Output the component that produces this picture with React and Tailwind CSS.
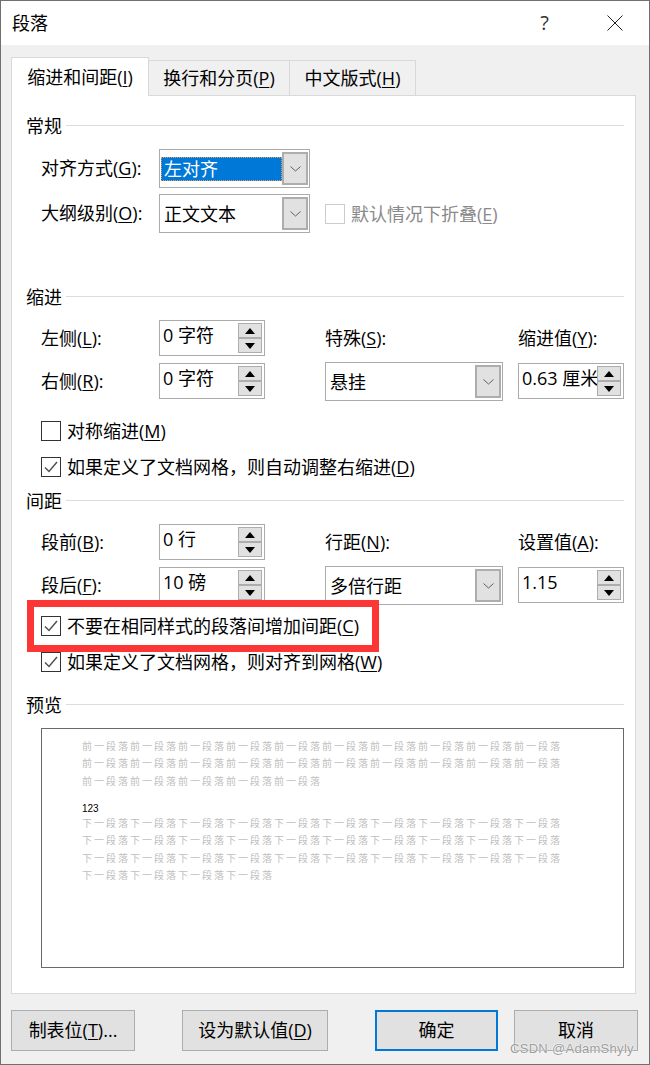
import React from "react";

const Key = ({ text, k, colon }) => (
  <span className="whitespace-nowrap">
    {text}(<u className="underline underline-offset-2">{k}</u>){colon ? ":" : ""}
  </span>
);

const Heading = ({ children, className = "" }) => (
  <div className={`flex h-6 items-center gap-[4px] ${className}`}>
    <span className="leading-6">{children}</span>
    <div className="mb-[2px] h-px flex-1 bg-[#dcdcdc]" />
  </div>
);

const Chevron = () => (
  <svg width="11" height="6" viewBox="0 0 11 6" fill="none">
    <path d="M0.5 0.5 L5.5 5 L10.5 0.5" stroke="#606060" strokeWidth="1" />
  </svg>
);

const Combo = ({ value, selected, className = "w-[178px]" }) => (
  <div className={`flex h-[39px] shrink-0 items-center border border-[#ababab] bg-white pr-[1px] ${className}`}>
    <div className="min-w-0 flex-1 pl-[1px]">
      {selected ? (
        <div className="h-[24px] border border-dotted border-[#e0a060] bg-[#0078d7] pl-[2px] leading-[22px] text-white">
          {value}
        </div>
      ) : (
        <div className="pl-[3px] leading-6">{value}</div>
      )}
    </div>
    <div className="flex h-[33px] w-[26px] items-center justify-center border-2 border-[#adadad] bg-[#e1e1e1]">
      <Chevron />
    </div>
  </div>
);

const Arrow = ({ down }) => (
  <svg width="10" height="6" viewBox="0 0 10 6">
    <path d={down ? "M0 0 H10 L5 6 Z" : "M0 6 H10 L5 0 Z"} fill="#000" />
  </svg>
);

const Spinner = ({ value }) => (
  <div className="flex h-9 w-[106px] shrink-0 border border-[#ababab] bg-white py-[2px] pl-[2px] pr-[2px]">
    <div className="min-w-0 flex-1 overflow-hidden whitespace-nowrap pl-[1px] leading-[25px]">{value}</div>
    <div className="flex w-6 shrink-0 flex-col">
      <div className="flex h-[15px] items-center justify-center border border-[#adadad] bg-[#e1e1e1]">
        <Arrow />
      </div>
      <div className="flex h-[15px] items-center justify-center border border-[#adadad] bg-[#e1e1e1]">
        <Arrow down />
      </div>
    </div>
  </div>
);

const Checkbox = ({ checked, disabled, className = "", children }) => (
  <div className={`flex h-5 items-center gap-[6px] ${className}`}>
    <div className={`flex size-5 shrink-0 items-center justify-center border bg-white ${disabled ? "border-[#cccccc]" : "border-[#333333]"}`}>
      {checked && (
        <svg width="14" height="12" viewBox="0 0 14 12" fill="none">
          <path d="M1 6.5 L5 10.5 L13 1" stroke="#505050" strokeWidth="1.5" />
        </svg>
      )}
    </div>
    <span className={`whitespace-nowrap leading-6 ${disabled ? "text-[#8a8a8a]" : ""}`}>{children}</span>
  </div>
);

// three columns shared by the indent and spacing groups
const FieldRows = ({ rows, mid, right }) => (
  <div className="ml-[15px] flex">
    <div className="w-[224px]">
      {rows.map((r, i) => (
        <div key={r.k} className={`flex h-9 ${i > 0 ? "mt-[7px]" : ""}`}>
          <div className="flex w-[118px] items-center pt-[1px]"><Key text={r.text} k={r.k} colon /></div>
          <Spinner value={r.value} />
        </div>
      ))}
    </div>
    <div className="ml-[60px] w-[178px]">
      <div className="flex h-[36px] items-center pt-[1px]"><Key text={mid.text} k={mid.k} colon /></div>
      <Combo value={mid.value} className="mt-[6px] w-[178px]" />
    </div>
    <div className="ml-[15px] w-[106px]">
      <div className="flex h-[36px] items-center pt-[1px]"><Key text={right.text} k={right.k} colon /></div>
      <div className="mt-[7px]"><Spinner value={right.value} /></div>
    </div>
  </div>
);

const Button = ({ className = "", primary, children }) => (
  <div
    className={`flex h-[41px] items-center justify-center bg-[#e1e1e1] pb-[1px] leading-5 ${
      primary ? "border-2 border-[#0078d7]" : "border border-[#adadad]"
    } ${className}`}
  >
    {children}
  </div>
);

const before = ["前一段落".repeat(10), "前一段落".repeat(10), "前一段落".repeat(5)];
const after = ["下一段落".repeat(10), "下一段落".repeat(10), "下一段落".repeat(10), "下一段落".repeat(4)];

export default function App() {
  return (
    <div className="relative h-[1065px] w-[650px] overflow-hidden border border-[#707070] bg-[#f0f0f0] font-['Open_Sans','Noto_Sans_CJK_SC',sans-serif] text-[18px] text-black">
      {/* title bar */}
      <div className="flex h-[44px] items-center bg-white pl-[11px]">
        <span>段落</span>
        <span className="ml-auto mr-[58px] text-[20px] text-[#333333]">?</span>
        <svg className="mr-[26px]" width="16" height="16" viewBox="0 0 16 16" fill="none">
          <path d="M0.5 0.5 L15.5 15.5 M15.5 0.5 L0.5 15.5" stroke="#222" strokeWidth="1" />
        </svg>
      </div>

      {/* tabs */}
      <div className="relative z-10 ml-[10px] mt-[12px] flex h-[39px] items-end">
        <div className="flex h-[39px] w-[138px] items-center justify-center border border-b-0 border-[#d9d9d9] bg-white">
          <Key text="缩进和间距" k="I" />
        </div>
        <div className="mb-px flex h-[35px] w-[141px] items-center justify-center border border-b-0 border-l-0 border-[#d9d9d9]">
          <Key text="换行和分页" k="P" />
        </div>
        <div className="mb-px flex h-[35px] w-[126px] items-center justify-center border border-b-0 border-l-0 border-[#d9d9d9]">
          <Key text="中文版式" k="H" />
        </div>
      </div>

      {/* panel */}
      <div className="ml-[10px] mt-[-1px] h-[899px] w-[625px] border border-[#d9d9d9] bg-white pl-[14px] pr-[11px]">
        <Heading className="mt-[18px]">常规</Heading>
        <div className="ml-[15px] mt-[11px] flex items-center">
          <div className="w-[118px]"><Key text="对齐方式" k="G" colon /></div>
          <Combo value="左对齐" selected className="w-[151px]" />
        </div>
        <div className="ml-[15px] mt-[6px] flex items-center">
          <div className="w-[118px]"><Key text="大纲级别" k="O" colon /></div>
          <Combo value="正文文本" className="w-[151px]" />
          <Checkbox disabled className="ml-[15px]"><Key text="默认情况下折叠" k="E" /></Checkbox>
        </div>

        <Heading className="mt-[52px]">缩进</Heading>
        <div className="mt-[11px]">
          <FieldRows
            rows={[
              { text: "左侧", k: "L", value: "0 字符" },
              { text: "右侧", k: "R", value: "0 字符" },
            ]}
            mid={{ text: "特殊", k: "S", value: "悬挂" }}
            right={{ text: "缩进值", k: "Y", value: "0.63 厘米" }}
          />
        </div>
        <Checkbox className="ml-[15px] mt-[20px]"><Key text="对称缩进" k="M" /></Checkbox>
        <Checkbox checked className="ml-[15px] mt-[16px]">
          如果定义了文档网格，则自动调整右缩进(<u className="underline underline-offset-2">D</u>)
        </Checkbox>

        <Heading className="mt-[12px]">间距</Heading>
        <div className="mt-[11px]">
          <FieldRows
            rows={[
              { text: "段前", k: "B", value: "0 行" },
              { text: "段后", k: "F", value: "10 磅" },
            ]}
            mid={{ text: "行距", k: "N", value: "多倍行距" }}
            right={{ text: "设置值", k: "A", value: "1.15" }}
          />
        </div>
        <Checkbox checked className="ml-[15px] mt-[11px]"><Key text="不要在相同样式的段落间增加间距" k="C" /></Checkbox>
        <Checkbox checked className="ml-[15px] mt-[16px]">
          如果定义了文档网格，则对齐到网格(<u className="underline underline-offset-2">W</u>)
        </Checkbox>

        <Heading className="mt-[21px]">预览</Heading>
        <div className="ml-[15px] mt-[11px] h-[240px] w-[583px] border border-[#696969] bg-white pl-[40px] pt-[9px] text-[10px] tracking-[2px] text-[#c0c0c0]">
          {before.map((line, i) => (
            <div key={i} className="whitespace-nowrap leading-[17.4px]">{line}</div>
          ))}
          <div className="mt-[11px] h-[14px] font-['Liberation_Sans',sans-serif] text-[10px] leading-[15px] tracking-normal text-black">123</div>
          {after.map((line, i) => (
            <div key={i} className="whitespace-nowrap leading-[17.2px]">{line}</div>
          ))}
        </div>
      </div>

      {/* footer buttons */}
      <div className="ml-[10px] mt-[16px] flex">
        <Button className="w-[124px]"><span>制表位(<u className="underline underline-offset-2">T</u>)...</span></Button>
        <Button className="ml-[47px] w-[146px]"><Key text="设为默认值" k="D" /></Button>
        <Button primary className="ml-[47px] w-[123px]">确定</Button>
        <Button className="ml-[16px] w-[124px]">取消</Button>
      </div>

      {/* highlight and watermark sit over the dialog */}
      <div className="absolute left-[26px] top-[599px] z-20 h-[52px] w-[352px] border-[7px] border-[#fc3535]" />
      <div className="absolute left-[509px] top-[1041px] z-20 whitespace-nowrap font-['Liberation_Sans',sans-serif] text-[13px] leading-[14px] tracking-[0.3px] text-[#9c9c9c] [text-shadow:0_0_2px_#ffffff,0_0_1px_#ffffff]">
        CSDN @AdamShyly
      </div>
    </div>
  );
}
